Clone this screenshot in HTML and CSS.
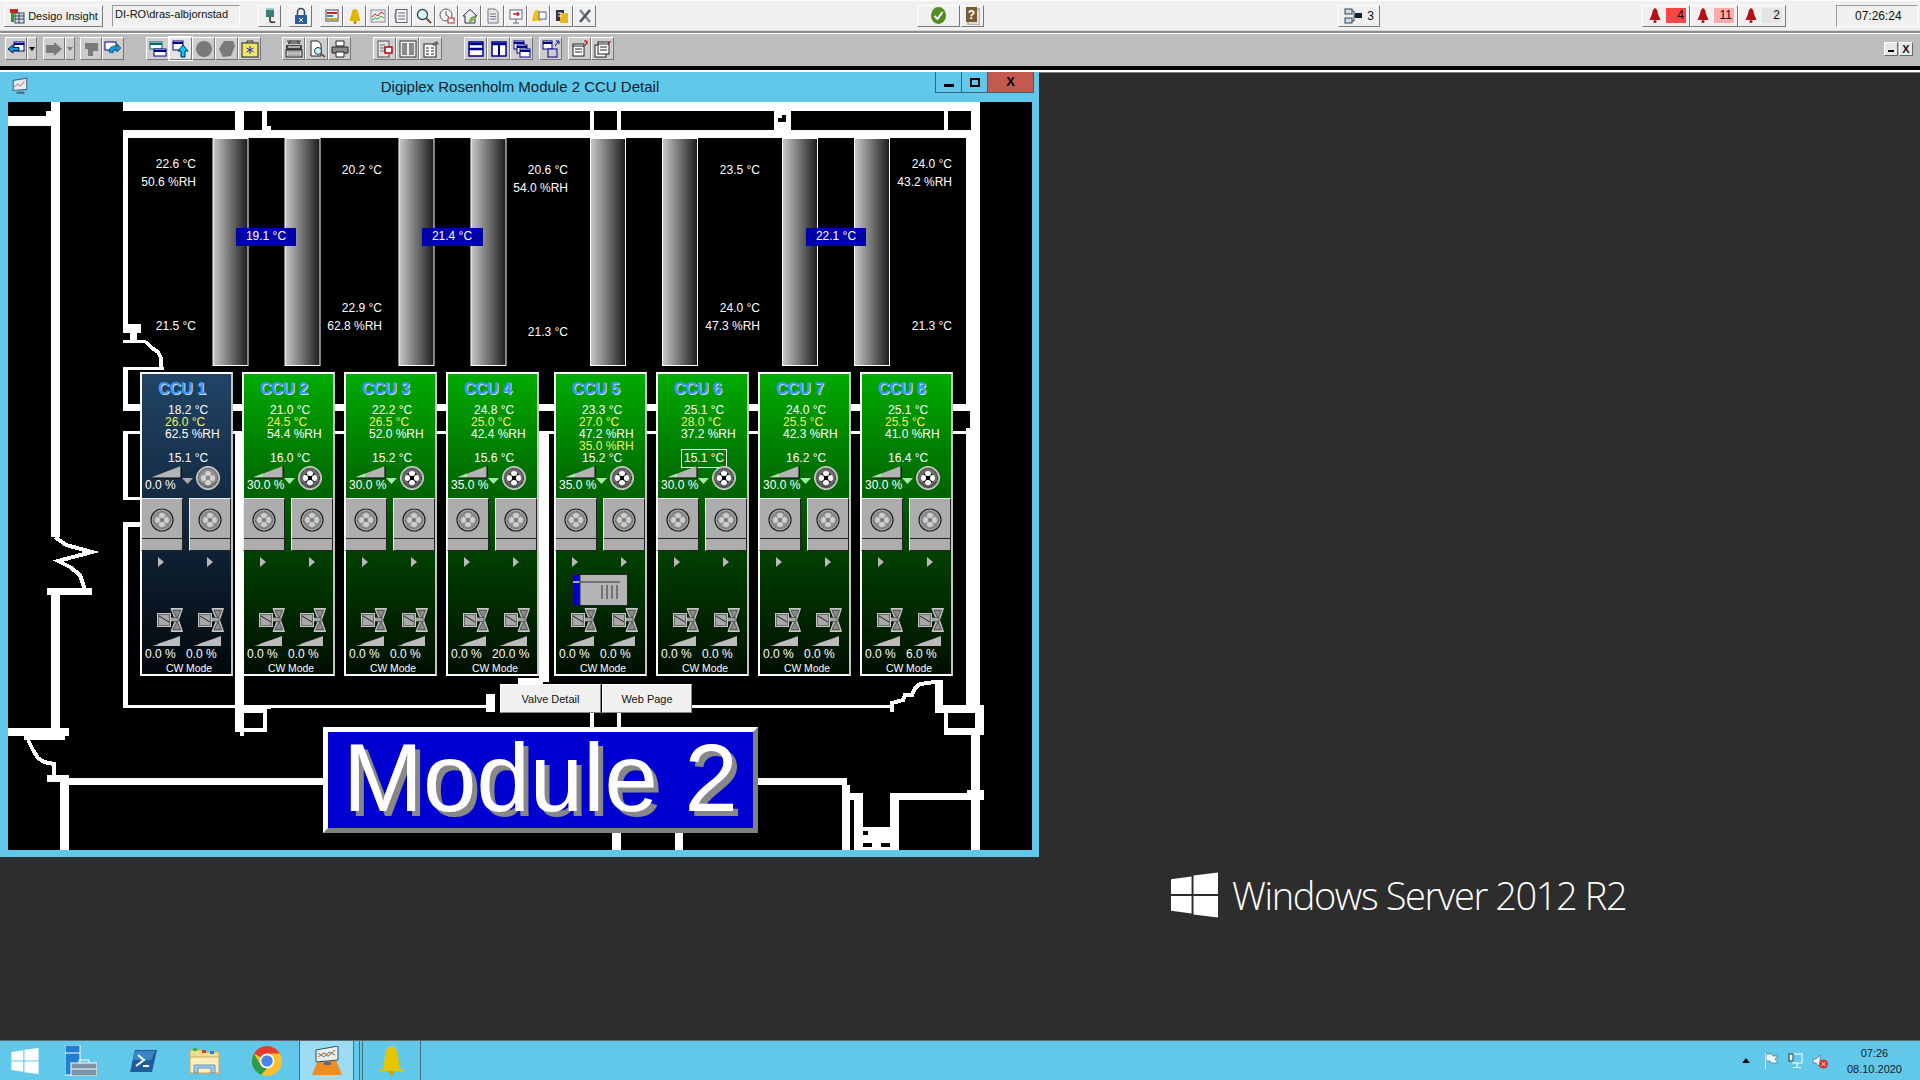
FILE: index.html
```html
<!DOCTYPE html>
<html lang="en">
<head>
    <meta charset="UTF-8">
    <title>Desigo Insight</title>
    <link rel="stylesheet" href="styles.css">
</head>
<body>
    <!-- shared graphics -->
    <svg class="defs" aria-hidden="true">
        <defs>
            <linearGradient id="aisle"><stop offset="0" stop-color="#c8c8c8"/><stop offset="1" stop-color="#1c1c1c"/></linearGradient>
            <symbol id="win" viewBox="0 0 48 46"><path d="M0 7 21 4V22H0ZM23 3 48 0V22H23ZM0 24H21V42L0 39ZM23 24H48V46L23 43Z"/></symbol>
            <symbol id="petals" viewBox="0 0 24 24"><ellipse cx="12" cy="7.500" rx="3" ry="2.500"/><ellipse cx="16.500" cy="12" rx="2.500" ry="3"/><ellipse cx="12" cy="16.500" rx="3" ry="2.500"/><ellipse cx="7.500" cy="12" rx="2.500" ry="3"/></symbol>
            <symbol id="fan-on" viewBox="0 0 24 24">
                <circle cx="12" cy="12" r="11.500" fill="#a8a8a8" stroke="#ddd"/>
                <circle cx="12" cy="12" r="9.500" fill="#6c6c6c" stroke="#333" stroke-dasharray="2 .6"/>
                <path d="M8 8 16 16M16 8 8 16" stroke="#000" stroke-width="2.400"/>
                <use href="#petals" width="24" height="24" fill="#fff"/>
                <path d="M3.500 16 12 21.500 20.500 16" fill="none" stroke="#444"/>
            </symbol>
            <symbol id="fan-off" viewBox="0 0 24 24">
                <circle cx="12" cy="12" r="11.500" fill="#a8a8a8" stroke="#ddd"/>
                <circle cx="12" cy="12" r="9.500" fill="#909090" stroke="#555" stroke-dasharray="2 .6"/>
                <use href="#petals" width="24" height="24" fill="#d4d4d4"/>
                <circle cx="12" cy="12" r="1.800" fill="#888"/>
                <path d="M3.500 16 12 21.500 20.500 16" fill="none" stroke="#555"/>
            </symbol>
            <symbol id="fan-unit" viewBox="0 0 24 24">
                <circle cx="12" cy="12" r="11" fill="#a8a8a8" stroke="#222" stroke-width="1.200"/>
                <circle cx="12" cy="12" r="8.500" fill="#909090" stroke="#555" stroke-dasharray="1.500 1"/>
                <use href="#petals" width="24" height="24" fill="#cfcfcf"/>
                <circle cx="12" cy="12" r="1.800" fill="#777"/>
            </symbol>
            <symbol id="drive-off" viewBox="0 0 42 18">
                <path d="M0 11.500 30 0V12H0Z" fill="#b4b4b4"/><path d="M0 12H30V0" fill="none" stroke="#000"/>
                <path d="M31 12H42L36.500 18Z" fill="#aaa"/>
            </symbol>
            <symbol id="drive-on" viewBox="0 0 42 18">
                <path d="M0 11.500 30 0V12H0Z" fill="#b4b4b4"/><path d="M0 11.500 10 7.500V12H0Z" fill="#a4eca4"/><path d="M0 12H30V0" fill="none" stroke="#000"/>
                <path d="M31 12H42L36.500 18Z" fill="#a4eca4"/>
            </symbol>
            <symbol id="valve" viewBox="0 0 26 24">
                <path d="M14 .5H25.500L21.500 12 25.500 23.500H14L18.500 12Z" fill="#a4a4a4" stroke="#c8c8c8"/>
                <path d="M16 2.500H23.500L20 10ZM16 21.500H23.500L20 14Z" fill="#8c8c8c" stroke="#333" stroke-width=".6"/>
                <rect x="12" y="9.500" width="9" height="4" fill="#a4a4a4" stroke="#444" stroke-width=".7"/>
                <rect x=".5" y="5.500" width="13" height="13" fill="#a8a8a8" stroke="#c8c8c8"/>
                <rect x="1.500" y="6.500" width="11" height="11" fill="none" stroke="#444" stroke-width=".6"/>
                <path d="M2 8 12 14" stroke="#222"/>
            </symbol>
            <symbol id="ramp" viewBox="0 0 28 10"><path d="M0 10 4 9 8 7 14 5 20 3 28 0V10Z" fill="#bcbcbc"/></symbol>
        </defs>
    </svg>

    <!-- application bar -->
    <header class="appbar">
        <button class="tb tb-app">
            <svg width="16" height="16" viewBox="0 0 16 16"><rect x="1" y="1" width="8" height="4" fill="#c22"/><path d="M2 5H5V14H2Z" fill="#2a9a2a"/><rect x="6" y="5" width="9" height="10" fill="#dde" stroke="#345"/><path d="M6 8H15M6 11H15M10 5V15" stroke="#345"/></svg>
            Desigo Insight
        </button>
        <div class="user-field">DI-RO\dras-albjornstad</div>
        <button class="tb tb-plug"><svg width="16" height="18" viewBox="0 0 16 18"><rect x="4" y="1" width="8" height="9" fill="#3a7c78"/><rect x="4" y="1" width="8" height="2" fill="#9fd0c8"/><path d="M8 10V14Q8 16 13 15" fill="none" stroke="#223" stroke-width="1.500"/></svg></button>
        <button class="tb tb-lock"><svg width="16" height="18" viewBox="0 0 16 18"><path d="M4.500 8V5A3.500 3.500 0 0 1 11.500 5V8" fill="none" stroke="#345" stroke-width="1.500"/><rect x="2" y="8" width="12" height="9" fill="#2d5c9c"/><path d="M6 11 10 15M10 11 6 15" stroke="#fff"/></svg></button>
        <div class="tb-group tb-tools">
            <button class="tb"><svg width="16" height="16" viewBox="0 0 16 16"><rect x="2" y="2" width="12" height="11" fill="#fff" stroke="#445"/><path d="M3 5H13" stroke="#c22" stroke-width="2"/><path d="M3 8H9" stroke="#28c" stroke-width="2"/><path d="M3 11H13" stroke="#ca2" stroke-width="2"/></svg></button>
            <button class="tb"><svg width="16" height="16" viewBox="0 0 16 16"><path d="M8 1Q11 1 11.500 6L13.500 13H2.500L4.500 6Q5 1 8 1Z" fill="#e2b400"/><circle cx="8" cy="14.500" r="1.500" fill="#b08800"/></svg></button>
            <button class="tb"><svg width="16" height="16" viewBox="0 0 16 16"><rect x="1" y="2" width="14" height="12" fill="#eee" stroke="#889"/><path d="M2 9 5 6 8 8 11 4 14 6" fill="none" stroke="#c22"/><path d="M2 12 5 10 8 11 11 8 14 10" fill="none" stroke="#3a3"/></svg></button>
            <button class="tb"><svg width="16" height="16" viewBox="0 0 16 16"><rect x="3" y="1.500" width="11" height="13" fill="#f4f4f4" stroke="#667"/><path d="M5 5H12M5 8H12M5 11H12" stroke="#667"/><path d="M3 2Q1 8 3 14" fill="none" stroke="#667"/></svg></button>
            <button class="tb"><svg width="16" height="16" viewBox="0 0 16 16"><circle cx="6.500" cy="6.500" r="5" fill="#dff" stroke="#345" stroke-width="1.300"/><path d="M10 10 15 15" stroke="#753" stroke-width="2.200"/></svg></button>
            <button class="tb"><svg width="16" height="16" viewBox="0 0 16 16"><circle cx="7" cy="7" r="6" fill="#f4f4f4" stroke="#556"/><path d="M7 3V7L10 9" fill="none" stroke="#556"/><rect x="9" y="10" width="6" height="5" fill="#fff" stroke="#c22"/></svg></button>
            <button class="tb"><svg width="16" height="16" viewBox="0 0 16 16"><path d="M1 8 8 1.500 15 8H13V15H3V8Z" fill="#eee" stroke="#234"/><path d="M7 14Q7 8 13 8Q13 14 7 14Z" fill="#7ab648"/></svg></button>
            <button class="tb"><svg width="16" height="16" viewBox="0 0 16 16"><path d="M3 1H10L13 4V15H3Z" fill="#e8e8e8" stroke="#778"/><path d="M5 6H11M5 8.500H11M5 11H11" stroke="#778"/></svg></button>
            <button class="tb"><svg width="16" height="16" viewBox="0 0 16 16"><rect x="2" y="2" width="12" height="9" fill="#fff" stroke="#667"/><path d="M5 6H11M9 4 11 6 9 8" fill="none" stroke="#c22" stroke-width="1.400"/><path d="M8 11V15M5 15H11" stroke="#667"/></svg></button>
            <button class="tb"><svg width="16" height="16" viewBox="0 0 16 16"><path d="M6 2Q9 2 9.500 6L11 13H1L2.500 6Q3 2 6 2Z" fill="#f0c020"/><rect x="8" y="4" width="7" height="7" fill="#fff" stroke="#46a"/></svg></button>
            <button class="tb"><svg width="16" height="16" viewBox="0 0 16 16"><rect x="2" y="2" width="8" height="11" fill="#334" /><rect x="6" y="5" width="8" height="10" fill="#e8b820"/><path d="M4 5H8M4 8H8" stroke="#fff"/></svg></button>
            <button class="tb"><svg width="16" height="16" viewBox="0 0 16 16"><path d="M3 2 13 14" stroke="#789" stroke-width="2.500"/><path d="M13 2 3 14" stroke="#456" stroke-width="2.500"/></svg></button>
        </div>
        <button class="tb tb-ok"><svg width="15" height="17" viewBox="0 0 15 17"><ellipse cx="7.500" cy="8.500" rx="7.500" ry="8.500" fill="#4f8f1e"/><path d="M3.500 9 6.500 12 11.500 5" fill="none" stroke="#fff" stroke-width="2"/></svg></button>
        <button class="tb tb-help"><svg width="14" height="18" viewBox="0 0 14 18"><rect x="2" y="2" width="12" height="16" fill="#ddd" stroke="#888"/><rect x="0" y="0" width="11" height="15" fill="#7a5c34"/><text x="5.500" y="12" class="help-mark">?</text></svg></button>
        <button class="tb tb-nodes">
            <svg width="18" height="16" viewBox="0 0 18 16"><rect x="1" y="1" width="7" height="5" fill="#cde" stroke="#345"/><rect x="1" y="10" width="7" height="5" fill="#cde" stroke="#345"/><path d="M8 3H10V13H8M10 8H12" fill="none" stroke="#345"/><rect x="11" y="5" width="7" height="5" fill="#123"/></svg>
            <span>3</span>
        </button>
        <div class="tb-group tb-alarms">
            <button class="tb tb-alarm"><svg class="bell" width="12" height="15" viewBox="0 0 12 15"><path d="M6 0Q8.500 1 9 6L11.500 12H.5L3 6Q3.500 1 6 0Z" fill="#b5101c"/><circle cx="6" cy="13.500" r="1.500" fill="#b5101c"/></svg><span class="chip chip-hi">4</span></button>
            <button class="tb tb-alarm"><svg class="bell" width="12" height="15" viewBox="0 0 12 15"><path d="M6 0Q8.500 1 9 6L11.500 12H.5L3 6Q3.500 1 6 0Z" fill="#b5101c"/><circle cx="6" cy="13.500" r="1.500" fill="#b5101c"/></svg><span class="chip chip-mid">11</span></button>
            <button class="tb tb-alarm"><svg class="bell" width="12" height="15" viewBox="0 0 12 15"><path d="M6 0Q8.500 1 9 6L11.500 12H.5L3 6Q3.500 1 6 0Z" fill="#b5101c"/><circle cx="6" cy="13.500" r="1.500" fill="#b5101c"/></svg><span class="chip chip-lo">2</span></button>
        </div>
        <div class="clock">07:26:24</div>
    </header>

    <!-- graphics toolbar -->
    <nav class="toolbar">
        <button class="tg tg-n"><svg width="18" height="16" viewBox="0 0 18 16"><rect x="7" y="1" width="10" height="9" fill="#fff" stroke="#008"/><path d="M7 3H17" stroke="#008" stroke-width="2"/><path d="M1 8 6 4V6.500H12V9.500H6V12Z" fill="#19d" stroke="#024"/></svg></button>
        <button class="tg tg-drop"><i class="caret"></i></button>
        <button class="tg tg-n gap-xs"><svg width="18" height="16" viewBox="0 0 18 16"><path d="M1 4H9V1L17 8 9 15V12H1Z" fill="#7a7a7a"/></svg></button>
        <button class="tg tg-drop"><i class="caret caret-dim"></i></button>
        <button class="tg tg-n gap-s"><svg width="18" height="16" viewBox="0 0 18 16"><path d="M3 2H16V10H11V15H6V8H3Z" fill="#7a7a7a"/></svg></button>
        <button class="tg tg-n"><svg width="18" height="16" viewBox="0 0 18 16"><rect x="1" y="1" width="11" height="8" fill="#fff" stroke="#008"/><path d="M5 11Q5 4 13 5V3L17 7 13 11V9Q9 8 9 12Z" fill="#19d" stroke="#024" stroke-width=".6"/></svg></button>

        <button class="tg gap-l"><svg width="18" height="16" viewBox="0 0 18 16"><rect x="1" y="1" width="12" height="7" fill="#fff" stroke="#066"/><path d="M1 3H13" stroke="#066" stroke-width="2"/><rect x="5" y="8" width="12" height="7" fill="#fff" stroke="#008"/><path d="M5 10H17" stroke="#008" stroke-width="2"/></svg></button>
        <button class="tg tg-active"><svg width="18" height="18" viewBox="0 0 18 18"><rect x="1" y="1" width="10" height="9" fill="#fff" stroke="#008"/><path d="M1 3H11" stroke="#008" stroke-width="2"/><path d="M9 17V11H6L11 5 16 11H13V17Z" fill="#0cf" stroke="#024"/></svg></button>
        <button class="tg"><svg width="18" height="18" viewBox="0 0 18 18"><circle cx="9" cy="9" r="8" fill="#7a7a7a"/></svg></button>
        <button class="tg"><svg width="18" height="18" viewBox="0 0 18 18"><path d="M6 1H15L17 6 13 16 5 17 1 9Z" fill="#7a7a7a"/></svg></button>
        <button class="tg"><svg width="18" height="18" viewBox="0 0 18 18"><path d="M6 3V1H12V3" fill="none" stroke="#333"/><rect x="1" y="3" width="16" height="14" fill="#f2e860" stroke="#222"/><path d="M9 6V14M5.500 8 12.500 12M12.500 8 5.500 12" stroke="#22c"/></svg></button>

        <button class="tg gap-m"><svg width="18" height="18" viewBox="0 0 18 18"><path d="M2 1 16 1M3 3 15 3M6 1 3 4M12 1 15 4" stroke="#222"/><rect x="1" y="5" width="16" height="5" fill="#444"/><path d="M3 7H15M3 12H15M3 15H15" stroke="#aaa" stroke-width="2"/><rect x="1" y="10" width="16" height="7" fill="none" stroke="#222"/></svg></button>
        <button class="tg"><svg width="18" height="18" viewBox="0 0 18 18"><path d="M3 1H10L13 4V16H3Z" fill="#fff" stroke="#222"/><circle cx="10" cy="11" r="3.500" fill="#cef" stroke="#234"/><path d="M12.500 13.500 17 17" stroke="#753" stroke-width="2"/></svg></button>
        <button class="tg"><svg width="18" height="18" viewBox="0 0 18 18"><path d="M5 1H13V6H5Z" fill="#fff" stroke="#222"/><path d="M1 7H17V13H1Z" fill="#888" stroke="#222"/><path d="M5 12H13V17H5Z" fill="#fff" stroke="#222"/></svg></button>

        <button class="tg gap-l"><svg width="18" height="18" viewBox="0 0 18 18"><rect x="2" y="1" width="11" height="16" fill="#e0e0e0" stroke="#555"/><path d="M4 5H9M4 8H9M4 11H9" stroke="#666"/><rect x="9" y="7" width="7" height="6" fill="#fff" stroke="#b00" stroke-width="1.500"/></svg></button>
        <button class="tg"><svg width="18" height="18" viewBox="0 0 18 18"><rect x="1" y="1" width="16" height="16" fill="#eee" stroke="#333"/><rect x="3" y="3" width="5" height="12" fill="#888"/><rect x="10" y="3" width="5" height="12" fill="#888"/></svg></button>
        <button class="tg"><svg width="18" height="18" viewBox="0 0 18 18"><rect x="2" y="4" width="12" height="13" fill="#fff" stroke="#222"/><path d="M4 8H7M9 8H12M4 11H7M9 11H12M4 14H7M9 14H12" stroke="#222"/><path d="M9 4 15 1 17 4 12 6Z" fill="#667"/></svg></button>

        <button class="tg gap-l"><svg width="18" height="18" viewBox="0 0 18 18"><rect x="2" y="2" width="14" height="14" fill="#fff" stroke="#008" stroke-width="1.500"/><path d="M2 4H16M2 9H16" stroke="#008" stroke-width="2.500"/></svg></button>
        <button class="tg"><svg width="18" height="18" viewBox="0 0 18 18"><rect x="2" y="2" width="14" height="14" fill="#fff" stroke="#008" stroke-width="1.500"/><path d="M2 4H16" stroke="#008" stroke-width="2.500"/><path d="M9 4V16" stroke="#008" stroke-width="2"/></svg></button>
        <button class="tg"><svg width="18" height="18" viewBox="0 0 18 18"><rect x="1" y="1" width="10" height="8" fill="#fff" stroke="#008"/><rect x="4" y="5" width="10" height="8" fill="#fff" stroke="#008"/><rect x="7" y="9" width="10" height="8" fill="#fff" stroke="#008"/><path d="M1 3H11M4 7H14M7 11H17" stroke="#008" stroke-width="2"/></svg></button>
        <button class="tg gap-xs"><svg width="18" height="18" viewBox="0 0 18 18"><rect x="1" y="1" width="9" height="8" fill="#fff" stroke="#008"/><path d="M1 3H10" stroke="#008" stroke-width="2"/><rect x="6" y="9" width="9" height="8" fill="#ccc" stroke="#008"/><path d="M13 6 16 2M14 1H17V4" fill="none" stroke="#008"/></svg></button>
        <button class="tg gap-xs"><svg width="18" height="18" viewBox="0 0 18 18"><rect x="2" y="4" width="11" height="12" fill="#fff" stroke="#222"/><path d="M2 6H13M4 9H11M4 12H11" stroke="#222"/><path d="M14 6 16 2M13 1H16V4" fill="none" stroke="#b00"/></svg></button>
        <button class="tg"><svg width="18" height="18" viewBox="0 0 18 18"><rect x="1" y="5" width="11" height="12" fill="#fff" stroke="#222"/><rect x="4" y="2" width="11" height="12" fill="#fff" stroke="#222"/><path d="M4 4H15M6 7H13M6 10H13" stroke="#222"/><path d="M14 4 17 1" stroke="#b00"/></svg></button>
        <div class="tb-end">
            <button class="mini"><i class="mini-min"></i></button>
            <button class="mini">X</button>
        </div>
    </nav>

    <main class="desk">
        <section class="window">
            <header class="window-title">
                <svg class="window-icon" width="18" height="18" viewBox="0 0 16 16"><path d="M2 3 14 1V11L2 12Z" fill="#dfeef5" stroke="#4a6a80"/><path d="M3 9 6 6 8 8 12 4" fill="none" stroke="#d88" /><path d="M5 14H12" stroke="#4a6a80" stroke-width="2"/></svg>
                Digiplex Rosenholm Module 2 CCU Detail
                <div class="window-btns">
                    <button class="wb wb-min"><i></i></button>
                    <button class="wb wb-max"><i></i></button>
                    <button class="wb wb-close">X</button>
                </div>
            </header>

            <div class="canvas">
                <!-- piping and aisles, page coordinates -->
                <svg class="plant" width="1024" height="748" viewBox="8 102 1024 748">
                    <g class="pipe">
                        <rect x="123" y="102" width="857" height="9"/><rect x="123" y="130" width="857" height="8"/>
                        <rect x="235" y="111" width="9" height="19"/><rect x="262" y="111" width="5" height="19"/><rect x="262" y="126" width="9" height="4"/>
                        <rect x="590" y="111" width="4" height="19"/><rect x="617" y="111" width="4" height="19"/><rect x="774" y="111" width="17" height="19"/>
                        <rect x="944" y="111" width="4" height="19"/><rect x="971" y="111" width="9" height="19"/>
                        <rect x="966" y="138" width="14" height="567"/><rect x="971" y="735" width="9" height="115"/>
                        <rect x="8" y="116" width="43" height="10"/><rect x="46" y="111" width="5" height="5"/><rect x="51" y="102" width="9" height="435"/>
                        <rect x="47" y="588" width="45" height="7"/><rect x="51" y="595" width="9" height="133"/><rect x="8" y="728" width="61" height="8"/><rect x="24" y="736" width="41" height="4"/>
                        <rect x="47" y="775" width="22" height="7"/><rect x="60" y="778" width="263" height="7"/><rect x="60" y="782" width="9" height="68"/>
                        <rect x="123" y="138" width="5" height="186"/><rect x="123" y="324" width="18" height="9"/><rect x="130" y="333" width="7" height="7"/><rect x="123" y="340" width="23" height="3"/>
                        <rect x="123" y="367" width="41" height="3"/><rect x="123" y="370" width="5" height="41"/>
                        <rect x="123" y="404" width="843" height="7"/><rect x="123" y="431" width="843" height="3"/>
                        <rect x="123" y="431" width="5" height="69"/><rect x="123" y="497" width="17" height="3"/>
                        <rect x="123" y="522" width="17" height="5"/><rect x="123" y="522" width="5" height="186"/>
                        <rect x="123" y="705" width="372" height="3"/><rect x="486" y="694" width="9" height="18"/>
                        <rect x="235" y="434" width="9" height="274"/>
                        <rect x="235" y="708" width="32" height="5"/><rect x="263" y="713" width="4" height="15"/><rect x="235" y="713" width="9" height="15"/><rect x="235" y="728" width="32" height="4"/>
                        <rect x="267" y="705" width="4" height="4"/><rect x="240" y="732" width="4" height="4"/>
                        <rect x="539" y="434" width="10" height="248"/><rect x="518" y="678" width="25" height="6"/>
                        <rect x="692" y="705" width="198" height="3"/>
                        <rect x="935" y="680" width="8" height="25"/><rect x="935" y="705" width="49" height="8"/><rect x="944" y="713" width="4" height="15"/><rect x="975" y="713" width="9" height="15"/><rect x="944" y="728" width="40" height="7"/>
                        <rect x="758" y="778" width="89" height="7"/><rect x="842" y="785" width="8" height="65"/><rect x="842" y="793" width="21" height="7"/><rect x="854" y="800" width="9" height="50"/>
                        <rect x="863" y="827" width="27" height="23"/><rect x="890" y="793" width="9" height="57"/><rect x="895" y="793" width="76" height="7"/><rect x="967" y="790" width="17" height="10"/>
                        <rect x="590" y="713" width="4" height="14"/><rect x="617" y="713" width="4" height="14"/><rect x="612" y="833" width="9" height="17"/><rect x="675" y="833" width="8" height="17"/>
                    </g>
                    <g class="pipe-bend">
                        <polyline points="55,537 66,545 92,552 58,561 70,567 80,575 85,590"/>
                        <polyline points="28,740 33,750 38,758 44,762 54,764 54,778"/>
                        <polyline points="146,342 152,348 158,352 161,358 161,370"/>
                        <polyline points="892,712 892,703 903,700 905,695 912,695 915,688 920,684 935,682"/>
                    </g>
                    <g class="gaps">
                        <path d="M782 115H786V122H778V118H782Z"/><rect x="953" y="411" width="17" height="17"/>
                        <rect x="863" y="831" width="5" height="4"/><rect x="863" y="843" width="9" height="4"/><rect x="881" y="843" width="9" height="4"/>
                    </g>

                    <g class="aisles">
                        <rect x="213" y="138.500" width="35" height="227"/><rect x="285" y="138.500" width="35" height="227"/>
                        <rect x="399" y="138.500" width="35" height="227"/><rect x="471" y="138.500" width="35" height="227"/>
                        <rect x="590.500" y="138.500" width="35" height="227"/><rect x="662.500" y="138.500" width="35" height="227"/>
                        <rect x="782.500" y="138.500" width="35" height="227"/><rect x="854.500" y="138.500" width="35" height="227"/>
                    </g>
                    <g class="tag">
                        <rect x="236" y="228" width="60" height="18"/><rect x="422" y="228" width="61" height="18"/><rect x="806" y="228" width="60" height="18"/>
                    </g>
                    <g class="tag-text">
                        <text x="266" y="240">19.1 °C</text><text x="452" y="240">21.4 °C</text><text x="836" y="240">22.1 °C</text>
                    </g>
                    <g class="reading">
                        <text x="196" y="168">22.6 °C</text><text x="196" y="186">50.6 %RH</text><text x="196" y="330">21.5 °C</text>
                        <text x="382" y="174">20.2 °C</text><text x="382" y="312">22.9 °C</text><text x="382" y="330">62.8 %RH</text>
                        <text x="568" y="174">20.6 °C</text><text x="568" y="192">54.0 %RH</text><text x="568" y="336">21.3 °C</text>
                        <text x="760" y="174">23.5 °C</text><text x="760" y="312">24.0 °C</text><text x="760" y="330">47.3 %RH</text>
                        <text x="952" y="168">24.0 °C</text><text x="952" y="186">43.2 %RH</text><text x="952" y="330">21.3 °C</text>
                    </g>
                </svg>

                <div class="ccu-row">
                    <article class="ccu ccu-off">
                        <h3 class="ccu-name">CCU 1</h3>
                        <div class="reads"><p>18.2 °C</p><p class="sp">26.0 °C</p><p class="rh">62.5 %RH</p><p>&nbsp;</p><p>15.1 °C</p></div>
                        <div class="drive"><div class="drive-left"><svg width="42" height="18"><use href="#drive-off"/></svg><span>0.0 %</span></div><svg class="drive-fan" width="24" height="24"><use href="#fan-off"/></svg></div>
                        <div class="units"><div class="unit"><svg width="24" height="24"><use href="#fan-unit"/></svg><i></i></div><div class="unit"><svg width="24" height="24"><use href="#fan-unit"/></svg><i></i></div></div>
                        <div class="pointers"><i></i><i></i></div>
                        <div class="valves"><div><svg class="valve" width="26" height="24"><use href="#valve"/></svg><svg class="vramp" width="28" height="10"><use href="#ramp"/></svg><span>0.0 %</span></div><div><svg class="valve" width="26" height="24"><use href="#valve"/></svg><svg class="vramp" width="28" height="10"><use href="#ramp"/></svg><span>0.0 %</span></div></div>
                        <p class="mode">CW Mode</p>
                    </article>
                    <article class="ccu">
                        <h3 class="ccu-name">CCU 2</h3>
                        <div class="reads"><p>21.0 °C</p><p class="sp">24.5 °C</p><p class="rh">54.4 %RH</p><p>&nbsp;</p><p>16.0 °C</p></div>
                        <div class="drive"><div class="drive-left"><svg width="42" height="18"><use href="#drive-on"/></svg><span>30.0 %</span></div><svg class="drive-fan" width="24" height="24"><use href="#fan-on"/></svg></div>
                        <div class="units"><div class="unit"><svg width="24" height="24"><use href="#fan-unit"/></svg><i></i></div><div class="unit"><svg width="24" height="24"><use href="#fan-unit"/></svg><i></i></div></div>
                        <div class="pointers"><i></i><i></i></div>
                        <div class="valves"><div><svg class="valve" width="26" height="24"><use href="#valve"/></svg><svg class="vramp" width="28" height="10"><use href="#ramp"/></svg><span>0.0 %</span></div><div><svg class="valve" width="26" height="24"><use href="#valve"/></svg><svg class="vramp" width="28" height="10"><use href="#ramp"/></svg><span>0.0 %</span></div></div>
                        <p class="mode">CW Mode</p>
                    </article>
                    <article class="ccu">
                        <h3 class="ccu-name">CCU 3</h3>
                        <div class="reads"><p>22.2 °C</p><p class="sp">26.5 °C</p><p class="rh">52.0 %RH</p><p>&nbsp;</p><p>15.2 °C</p></div>
                        <div class="drive"><div class="drive-left"><svg width="42" height="18"><use href="#drive-on"/></svg><span>30.0 %</span></div><svg class="drive-fan" width="24" height="24"><use href="#fan-on"/></svg></div>
                        <div class="units"><div class="unit"><svg width="24" height="24"><use href="#fan-unit"/></svg><i></i></div><div class="unit"><svg width="24" height="24"><use href="#fan-unit"/></svg><i></i></div></div>
                        <div class="pointers"><i></i><i></i></div>
                        <div class="valves"><div><svg class="valve" width="26" height="24"><use href="#valve"/></svg><svg class="vramp" width="28" height="10"><use href="#ramp"/></svg><span>0.0 %</span></div><div><svg class="valve" width="26" height="24"><use href="#valve"/></svg><svg class="vramp" width="28" height="10"><use href="#ramp"/></svg><span>0.0 %</span></div></div>
                        <p class="mode">CW Mode</p>
                    </article>
                    <article class="ccu">
                        <h3 class="ccu-name">CCU 4</h3>
                        <div class="reads"><p>24.8 °C</p><p class="sp">25.0 °C</p><p class="rh">42.4 %RH</p><p>&nbsp;</p><p>15.6 °C</p></div>
                        <div class="drive"><div class="drive-left"><svg width="42" height="18"><use href="#drive-on"/></svg><span>35.0 %</span></div><svg class="drive-fan" width="24" height="24"><use href="#fan-on"/></svg></div>
                        <div class="units"><div class="unit"><svg width="24" height="24"><use href="#fan-unit"/></svg><i></i></div><div class="unit"><svg width="24" height="24"><use href="#fan-unit"/></svg><i></i></div></div>
                        <div class="pointers"><i></i><i></i></div>
                        <div class="valves"><div><svg class="valve" width="26" height="24"><use href="#valve"/></svg><svg class="vramp" width="28" height="10"><use href="#ramp"/></svg><span>0.0 %</span></div><div><svg class="valve" width="26" height="24"><use href="#valve"/></svg><svg class="vramp" width="28" height="10"><use href="#ramp"/></svg><span>20.0 %</span></div></div>
                        <p class="mode">CW Mode</p>
                    </article>
                    <article class="ccu ccu-split">
                        <h3 class="ccu-name">CCU 5</h3>
                        <div class="reads"><p>23.3 °C</p><p class="sp">27.0 °C</p><p class="rh">47.2 %RH</p><p class="sp">35.0 %RH</p><p>15.2 °C</p></div>
                        <div class="drive"><div class="drive-left"><svg width="42" height="18"><use href="#drive-on"/></svg><span>35.0 %</span></div><svg class="drive-fan" width="24" height="24"><use href="#fan-on"/></svg></div>
                        <div class="units"><div class="unit"><svg width="24" height="24"><use href="#fan-unit"/></svg><i></i></div><div class="unit"><svg width="24" height="24"><use href="#fan-unit"/></svg><i></i></div></div>
                        <div class="pointers"><i></i><i></i></div>
                        <svg class="device" width="56" height="32" viewBox="0 0 56 32"><rect x=".5" y=".5" width="55" height="31" fill="#b4b4b4" stroke="#222"/><rect x="1" y="1" width="7" height="30" fill="#0000d0"/><path d="M1 8H8" stroke="#aaa" stroke-width="2"/><path d="M8 1V31M8 8H48" stroke="#333"/><path d="M30 11V25M35 11V25M40 11V25M45 11V25" stroke="#333"/></svg>
                        <div class="valves"><div><svg class="valve" width="26" height="24"><use href="#valve"/></svg><svg class="vramp" width="28" height="10"><use href="#ramp"/></svg><span>0.0 %</span></div><div><svg class="valve" width="26" height="24"><use href="#valve"/></svg><svg class="vramp" width="28" height="10"><use href="#ramp"/></svg><span>0.0 %</span></div></div>
                        <p class="mode">CW Mode</p>
                    </article>
                    <article class="ccu">
                        <h3 class="ccu-name">CCU 6</h3>
                        <div class="reads"><p>25.1 °C</p><p class="sp">28.0 °C</p><p class="rh">37.2 %RH</p><p>&nbsp;</p><p><span class="picked">15.1 °C</span></p></div>
                        <div class="drive"><div class="drive-left"><svg width="42" height="18"><use href="#drive-on"/></svg><span>30.0 %</span></div><svg class="drive-fan" width="24" height="24"><use href="#fan-on"/></svg></div>
                        <div class="units"><div class="unit"><svg width="24" height="24"><use href="#fan-unit"/></svg><i></i></div><div class="unit"><svg width="24" height="24"><use href="#fan-unit"/></svg><i></i></div></div>
                        <div class="pointers"><i></i><i></i></div>
                        <div class="valves"><div><svg class="valve" width="26" height="24"><use href="#valve"/></svg><svg class="vramp" width="28" height="10"><use href="#ramp"/></svg><span>0.0 %</span></div><div><svg class="valve" width="26" height="24"><use href="#valve"/></svg><svg class="vramp" width="28" height="10"><use href="#ramp"/></svg><span>0.0 %</span></div></div>
                        <p class="mode">CW Mode</p>
                    </article>
                    <article class="ccu">
                        <h3 class="ccu-name">CCU 7</h3>
                        <div class="reads"><p>24.0 °C</p><p class="sp">25.5 °C</p><p class="rh">42.3 %RH</p><p>&nbsp;</p><p>16.2 °C</p></div>
                        <div class="drive"><div class="drive-left"><svg width="42" height="18"><use href="#drive-on"/></svg><span>30.0 %</span></div><svg class="drive-fan" width="24" height="24"><use href="#fan-on"/></svg></div>
                        <div class="units"><div class="unit"><svg width="24" height="24"><use href="#fan-unit"/></svg><i></i></div><div class="unit"><svg width="24" height="24"><use href="#fan-unit"/></svg><i></i></div></div>
                        <div class="pointers"><i></i><i></i></div>
                        <div class="valves"><div><svg class="valve" width="26" height="24"><use href="#valve"/></svg><svg class="vramp" width="28" height="10"><use href="#ramp"/></svg><span>0.0 %</span></div><div><svg class="valve" width="26" height="24"><use href="#valve"/></svg><svg class="vramp" width="28" height="10"><use href="#ramp"/></svg><span>0.0 %</span></div></div>
                        <p class="mode">CW Mode</p>
                    </article>
                    <article class="ccu">
                        <h3 class="ccu-name">CCU 8</h3>
                        <div class="reads"><p>25.1 °C</p><p class="sp">25.5 °C</p><p class="rh">41.0 %RH</p><p>&nbsp;</p><p>16.4 °C</p></div>
                        <div class="drive"><div class="drive-left"><svg width="42" height="18"><use href="#drive-on"/></svg><span>30.0 %</span></div><svg class="drive-fan" width="24" height="24"><use href="#fan-on"/></svg></div>
                        <div class="units"><div class="unit"><svg width="24" height="24"><use href="#fan-unit"/></svg><i></i></div><div class="unit"><svg width="24" height="24"><use href="#fan-unit"/></svg><i></i></div></div>
                        <div class="pointers"><i></i><i></i></div>
                        <div class="valves"><div><svg class="valve" width="26" height="24"><use href="#valve"/></svg><svg class="vramp" width="28" height="10"><use href="#ramp"/></svg><span>0.0 %</span></div><div><svg class="valve" width="26" height="24"><use href="#valve"/></svg><svg class="vramp" width="28" height="10"><use href="#ramp"/></svg><span>6.0 %</span></div></div>
                        <p class="mode">CW Mode</p>
                    </article>
                </div>

                <div class="links">
                    <button class="link-btn link-valve">Valve Detail</button>
                    <button class="link-btn link-web">Web Page</button>
                </div>
                <div class="banner">Module 2</div>
            </div>
        </section>

        <div class="watermark">
            <svg width="47" height="46"><use href="#win"/></svg>
            <span>Windows Server 2012 R2</span>
        </div>
    </main>

    <footer class="taskbar">
        <a class="task task-start"><svg width="28" height="26"><use href="#win"/></svg></a>
        <a class="task task-server"><svg width="32" height="31" viewBox="0 0 32 31"><rect x="0" y="0" width="15" height="30" fill="#1f7fd0" stroke="#fff"/><path d="M0 8H15" stroke="#fff"/><rect x="6" y="18" width="26" height="13" fill="#7b93a4" stroke="#fff"/><path d="M14 18V15H24V18M6 24H32" fill="none" stroke="#fff"/></svg></a>
        <a class="task task-ps"><svg width="27" height="22" viewBox="0 0 27 22"><path d="M5 0H27L22 22H0Z" fill="#1f5c9a"/><path d="M4 1H25L21 10H3Z" fill="#3a84c4"/><path d="M8 5 14 10 6 16M13 16H19" fill="none" stroke="#fff" stroke-width="2"/></svg></a>
        <a class="task task-files"><svg width="32" height="27" viewBox="0 0 32 27"><path d="M1 3H13L15 5H30V26H1Z" fill="#f2dc90" stroke="#c8aa5a"/><rect x="4" y="1" width="4" height="3" fill="#3cb83c"/><rect x="13" y="3" width="4" height="3" fill="#d83c2c"/><rect x="21" y="4" width="4" height="3" fill="#2c7cd8"/><path d="M1 10H30V26H1Z" fill="#fbeeb8" stroke="#c8aa5a"/><path d="M5 26V18H26V26H22V21H9V26Z" fill="#9cc8ee" stroke="#6a94b8"/></svg></a>
        <a class="task task-chrome"><svg width="30" height="30" viewBox="0 0 30 30"><circle cx="15" cy="15" r="15" fill="#fbc02d"/><path d="M15 0A15 15 0 0 1 28 7.500H15A7.500 7.500 0 0 0 8.500 11.200L2 7.500A15 15 0 0 1 15 0Z" fill="#e53935"/><path d="M2 7.500 8.500 18.800A7.500 7.500 0 0 0 15 22.500L9 29A15 15 0 0 1 2 7.500Z" fill="#2e9b4f"/><circle cx="15" cy="15" r="6.500" fill="#4a86e8" stroke="#fff" stroke-width="1.500"/></svg></a>
        <a class="task-btn task-open"><svg width="30" height="29" viewBox="0 0 30 29"><path d="M6 14H24L30 29H0Z" fill="#f28c1e"/><path d="M4 4 26 0V14L4 16Z" fill="#e6f0f5" stroke="#33505f"/><path d="M6 11 12 7 16 10 23 4" fill="none" stroke="#e88a2a" stroke-width="1.500"/><path d="M6 7 12 11 17 6 23 9" fill="none" stroke="#3c86c4"/><rect x="12" y="16" width="7" height="3" fill="#667"/></svg></a>
        <i class="task-sep"></i>
        <a class="task-btn task-bell"><svg width="27" height="29" viewBox="0 0 27 29"><path d="M13.500 0Q19 0 20 10L22 22 27 25H0L5 22 7 10Q8 0 13.500 0Z" fill="#e6c400"/><circle cx="13.500" cy="27" r="2.500" fill="#c8a800"/></svg></a>

        <div class="tray">
            <i class="tray-up"></i>
            <svg width="16" height="16" viewBox="0 0 16 16"><path d="M2.500 0V16" stroke="#fff"/><path d="M3 1H9L10 3H15L12 6 15 10H8L7 8H3Z" fill="#eaf6fb" stroke="#345"  stroke-width=".5"/></svg>
            <svg width="15" height="16" viewBox="0 0 15 16"><rect x="5" y="1" width="9" height="9" fill="none" stroke="#fff"/><rect x="1" y="1" width="4" height="7" fill="#dff" stroke="#234"/><path d="M9 10V14M5 14.500H13" stroke="#fff"/></svg>
            <svg width="16" height="16" viewBox="0 0 16 16"><path d="M1 6H4L8 2V14L4 10H1Z" fill="#eef" stroke="#345" stroke-width=".5"/><circle cx="11.500" cy="11" r="4.500" fill="#e03030"/><path d="M9.500 9 13.500 13M13.500 9 9.500 13" stroke="#fff"/></svg>
            <div class="tray-time"><span>07:26</span><span>08.10.2020</span></div>
        </div>
    </footer>
</body>
</html>
```

FILE: styles.css
```css
html, body {
    height: 100%;
}

body {
    margin: 0;
    display: flex;
    flex-direction: column;
    overflow: hidden;
    background-color: #2d2d2d;
    font-family: "Liberation Sans", Arial, sans-serif;
    font-size: 12px;
    color: #111;
}

button {
    font: inherit;
    color: inherit;
    padding: 0;
    margin: 0;
}

.defs {
    position: absolute;
    width: 0;
    height: 0;
}

/* application bar */
.appbar {
    display: flex;
    align-items: center;
    flex: none;
    box-sizing: border-box;
    height: 33px;
    padding: 4px 0 5px 4px;
    background-color: #f0f0f0;
    border-top: 1px solid #fff;
    border-bottom: 2px solid #8c8c8c;
    box-shadow: inset 0 -1px 0 #d8d8d8;
}

.tb {
    display: flex;
    align-items: center;
    justify-content: center;
    box-sizing: border-box;
    width: 23px;
    height: 22px;
    background-color: #f0f0f0;
    border: 1px solid;
    border-color: #fff #777 #777 #fff;
    flex: none;
}

.tb-app {
    width: 99px;
    gap: 3px;
    font-size: 11px;
    white-space: nowrap;
}

.user-field {
    box-sizing: border-box;
    width: 128px;
    height: 22px;
    margin-left: 9px;
    padding: 1px 2px;
    font-size: 11px;
    line-height: 14px;
    border: 1px solid;
    border-color: #999 #fff #fff #999;
}

.tb-plug { margin-left: 18px; }
.tb-lock { margin-left: 8px; }

.tb-group {
    display: flex;
    flex: none;
}

.tb-tools { margin-left: 8px; }
.tb-ok { width: 43px; margin-left: 321px; }
.tb-help { margin-left: 1px; }

.tb-nodes {
    width: 42px;
    gap: 5px;
    margin-left: 354px;
}

.tb-alarms { margin-left: 262px; }

.tb-alarm {
    justify-content: flex-start;
    width: 48px;
    padding-left: 6px;
    gap: 5px;
}

.chip {
    box-sizing: border-box;
    width: 20px;
    height: 15px;
    padding-right: 2px;
    text-align: right;
    line-height: 15px;
}

.chip-hi { background-color: #ff4444; }
.chip-mid { background-color: #ffaaaa; }
.chip-lo { background-color: #e4e4e4; }

.clock {
    box-sizing: border-box;
    width: 82px;
    height: 22px;
    margin-left: 50px;
    padding-left: 18px;
    line-height: 20px;
    border: 1px solid;
    border-color: #999 #fff #fff #999;
}

.help-mark {
    font-size: 12px;
    font-weight: bold;
    fill: #fff;
    text-anchor: middle;
}

/* graphics toolbar */
.toolbar {
    display: flex;
    align-items: center;
    flex: none;
    box-sizing: border-box;
    height: 37px;
    padding: 4px 4px 7px 5px;
    background-color: #bdbdbd;
    border-top: 1px solid #fff;
    border-bottom: 4px solid #000;
    box-shadow: 0 2px 0 #fff, 0 3px 0 #777;
}

.tg {
    display: flex;
    align-items: center;
    justify-content: center;
    box-sizing: border-box;
    width: 23px;
    height: 23px;
    background-color: #cdcdcd;
    border: 1px solid;
    border-color: #fff #777 #777 #fff;
    flex: none;
}

.tg-n { width: 22px; }
.tg-drop { width: 10px; }
.tg-active { background-color: #e4e4e4; outline: 1px solid #fff; }
.gap-xs { margin-left: 6px; }
.gap-s { margin-left: 5px; }
.gap-m { margin-left: 21px; }
.gap-l { margin-left: 22px; }

.caret {
    width: 0;
    height: 0;
    border: 3px solid transparent;
    border-top: 4px solid #000;
    border-bottom: 0;
}

.caret-dim { border-top-color: #7a7a7a; }

.tb-end {
    display: flex;
    gap: 1px;
    margin-left: auto;
    margin-right: 3px;
}

.mini {
    display: flex;
    align-items: center;
    justify-content: center;
    box-sizing: border-box;
    width: 14px;
    height: 14px;
    font-size: 11px;
    font-weight: bold;
    background-color: #e8e8e8;
    border: 1px solid;
    border-color: #fff #666 #666 #fff;
}

.mini-min {
    width: 6px;
    height: 2px;
    margin-top: 5px;
    background-color: #000;
}

/* desktop and the window */
.desk {
    position: relative;
    flex: 1;
    padding-top: 2px;
}

.window {
    box-sizing: border-box;
    width: 1039px;
    padding: 0 7px 7px 8px;
    background-color: #62c8ea;
}

.window-title {
    position: relative;
    height: 30px;
    font-size: 15px;
    line-height: 30px;
    text-align: center;
    color: #10202c;
}

.window-icon {
    position: absolute;
    left: 3px;
    top: 5px;
}

.window-btns {
    position: absolute;
    right: -2px;
    top: 0;
    display: flex;
}

.wb {
    display: flex;
    align-items: center;
    justify-content: center;
    box-sizing: border-box;
    width: 27px;
    height: 21px;
    background-color: transparent;
    border: 1px solid #3b5f70;
    border-top: 0;
    margin-right: -1px;
}

.wb-close {
    width: 47px;
    background-color: #c35a4f;
    font-size: 13px;
    font-weight: bold;
    color: #000;
    margin-right: 0;
}

.wb-min i {
    width: 10px;
    height: 3px;
    margin-top: 6px;
    background-color: #000;
}

.wb-max i {
    box-sizing: border-box;
    width: 10px;
    height: 9px;
    border: 2px solid #000;
}

.canvas {
    position: relative;
    width: 1024px;
    height: 748px;
    overflow: hidden;
    background-color: #000;
}

.plant {
    display: block;
}

.pipe rect { fill: #fff; }
.gaps rect, .gaps path { fill: #000; }

.pipe-bend polyline {
    fill: none;
    stroke: #fff;
    stroke-width: 4;
    shape-rendering: crispEdges;
}

.aisles rect {
    fill: url(#aisle);
    stroke: #fff;
    stroke-width: 1;
}

.tag rect { fill: #0000a8; }

.tag-text text {
    font-size: 12px;
    fill: #fff;
    text-anchor: middle;
}

.reading text {
    font-size: 12px;
    fill: #fff;
    text-anchor: end;
}

/* CCU cards */
.ccu-row {
    position: absolute;
    left: 132px;
    top: 270px;
    display: flex;
    gap: 9px;
}

.ccu {
    position: relative;
    box-sizing: border-box;
    width: 93px;
    height: 304px;
    border: 2px solid;
    border-color: #fff #c4c4c4 #fff #fff;
    color: #fff;
    background: linear-gradient(180deg, #00ab00 0%, #004000 60%, #000e00 100%);
}

.ccu p {
    margin: 0;
}

.ccu-off {
    background: linear-gradient(180deg, #214466 0%, #0f2033 60%, #02080c 100%);
}

.ccu-split {
    margin-left: 6px;
}

.ccu-name {
    height: 30px;
    margin: 0;
    padding-right: 9px;
    font-size: 16px;
    font-weight: bold;
    line-height: 30px;
    text-align: center;
    color: #3d96f2;
    text-shadow: 1px 1px #c4dcff;
}

.reads {
    height: 60px;
    padding-left: 26px;
    line-height: 12px;
}

.reads .sp,
.reads .rh {
    margin-left: -3px;
}

.reads .sp {
    color: #f4f46a;
}

.picked {
    display: inline-block;
    box-sizing: border-box;
    height: 19px;
    margin: -4px 0 -3px -3px;
    padding: 0 2px;
    line-height: 17px;
    border: 1px solid #fff;
}

.drive {
    display: flex;
    align-items: flex-start;
    height: 34px;
    padding-top: 2px;
    box-sizing: border-box;
}

.drive-left {
    display: flex;
    flex-direction: column;
    width: 54px;
    padding-left: 3px;
    box-sizing: border-box;
}

.drive-left svg {
    display: block;
    margin-left: 6px;
}

.drive-left span {
    margin-top: -5px;
    line-height: 12px;
}

.drive-fan {
    flex: none;
}

.units {
    display: flex;
    gap: 6px;
    margin-left: -1px;
}

.unit {
    display: flex;
    flex-direction: column;
    align-items: center;
    box-sizing: border-box;
    width: 42px;
    height: 53px;
    padding-top: 9px;
    background-color: #adadad;
    border: 1px solid;
    border-color: #eee #222 #222 #eee;
}

.unit i {
    align-self: stretch;
    height: 1px;
    margin-top: 6px;
    background-color: #222;
}

.pointers {
    display: flex;
    gap: 43px;
    height: 11px;
    margin-top: 6px;
    padding-left: 16px;
}

.pointers i {
    width: 0;
    height: 0;
    border-left: 6px solid #b8b8b8;
    border-top: 5.500px solid transparent;
    border-bottom: 5.500px solid transparent;
}

.device {
    position: absolute;
    left: 16px;
    top: 200px;
}

.valves {
    display: grid;
    grid-template-columns: 41px 41px;
    margin-top: 40px;
    padding-left: 3px;
    line-height: 12px;
}

.valves div {
    display: flex;
    flex-direction: column;
}

.valve {
    margin-left: 12px;
}

.vramp {
    margin: 4px 0 2px 7px;
}

.ccu .mode {
    margin-top: 3px;
    padding-left: 5px;
    font-size: 10.400px;
    line-height: 11px;
    text-align: center;
    color: #fff;
}

/* buttons and the module banner */
.links {
    position: absolute;
    left: 492px;
    top: 582px;
    display: flex;
    gap: 1px;
}

.link-btn {
    box-sizing: border-box;
    height: 29px;
    font-size: 11px;
    background-color: #f0f0f0;
    border: 1px solid;
    border-color: #fff #888 #888 #fff;
}

.link-valve { width: 101px; }
.link-web { width: 90px; }

.banner {
    position: absolute;
    left: 315px;
    top: 625px;
    box-sizing: border-box;
    width: 435px;
    height: 106px;
    font-size: 96px;
    line-height: 92px;
    text-align: center;
    color: #fff;
    background-color: #0000d0;
    border: 5px solid;
    border-color: #fff #808080 #808080 #fff;
    text-shadow: 5px 5px 0 #888;
}

/* windows watermark */
.watermark {
    position: absolute;
    left: 1171px;
    top: 799px;
    display: flex;
    align-items: center;
    gap: 14px;
    color: #fff;
    fill: #fff;
}

.watermark span {
    font-family: "Open Sans", sans-serif;
    font-size: 38px;
    font-weight: 300;
    letter-spacing: -1.400px;
    white-space: nowrap;
}

/* taskbar */
.taskbar {
    display: flex;
    align-items: center;
    flex: none;
    box-sizing: border-box;
    height: 40px;
    background-color: #62c8ea;
    border-top: 1px solid #5f6a70;
    fill: #fff;
}

.task {
    display: flex;
    flex: none;
}

.task-start { margin-left: 11px; }
.task-server { margin-left: 26px; }
.task-ps { margin-left: 33px; }
.task-files { margin-left: 32px; }
.task-chrome { margin-left: 31px; }

.task-btn {
    display: flex;
    align-items: center;
    justify-content: center;
    flex: none;
    box-sizing: border-box;
    height: 39px;
    border-left: 1px solid #3b6f86;
    border-right: 1px solid #3b6f86;
}

.task-open {
    width: 55px;
    margin-left: 17px;
    background-color: #9cdcf3;
}

.task-sep {
    flex: none;
    width: 4px;
    height: 39px;
    margin-left: 1px;
    border-right: 1px solid #3b6f86;
}

.task-bell {
    width: 59px;
    margin-left: 2px;
}

.tray {
    display: flex;
    align-items: center;
    gap: 9px;
    margin-left: auto;
    padding-right: 18px;
}

.tray-up {
    width: 0;
    height: 0;
    margin-right: 4px;
    border: 4px solid transparent;
    border-bottom: 5px solid #111;
    border-top: 0;
}

.tray-time {
    display: flex;
    flex-direction: column;
    align-items: center;
    gap: 4px;
    margin-left: 10px;
    font-size: 11px;
    line-height: 12px;
    color: #10202c;
}
```
